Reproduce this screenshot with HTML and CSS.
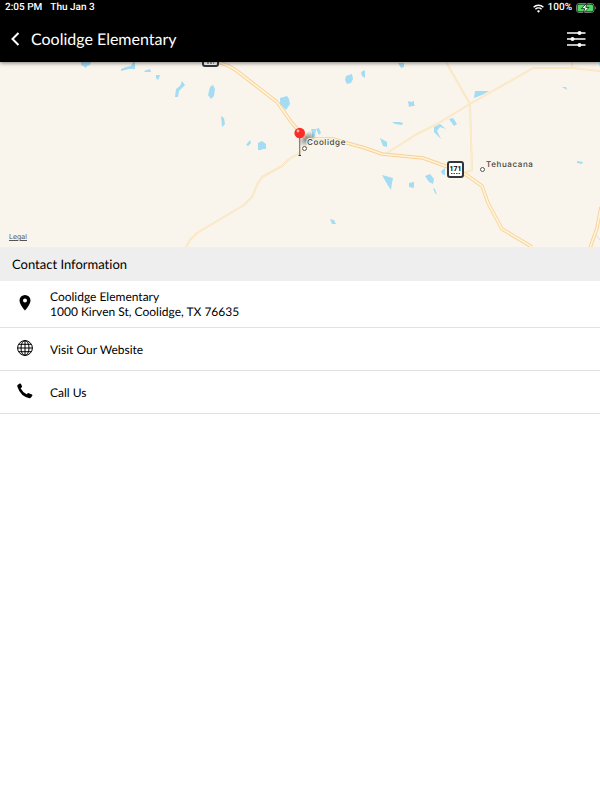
FILE: index.html
```html
<!doctype html>
<html lang="en">
  <head>
    <meta charset="utf-8" />
    <meta name="viewport" content="width=device-width, initial-scale=1" />
    <title>Coolidge Elementary</title>
    <link rel="stylesheet" href="styles.css">
  </head>
  <body>
    <header class="top">
      <div class="status">
        <span>2:05 PM</span>
        <span>Thu Jan 3</span>
        <span class="status-right">
          <svg width="11" height="9" viewBox="0 0 11 9" fill="none" stroke="#fff" stroke-width="1.5">
            <path d="M.6 3.3a7 7 0 0 1 9.8 0M2.4 5.3a4.5 4.5 0 0 1 6.2 0" />
            <path d="M5.5 8.8 3.9 7a2.3 2.3 0 0 1 3.2 0z" fill="#fff" stroke="none" />
          </svg>
          <span>100%</span>
          <svg width="20" height="10" viewBox="0 0 20 10">
            <rect x=".5" y=".5" width="17.5" height="9" rx="2.5" fill="none" stroke="#777" />
            <rect x="1.5" y="1.5" width="15.5" height="7" rx="1.5" fill="#4cd964" />
            <path d="M11 0 5.5 5.6h3.2L7.5 10 13 4.4H9.8z" fill="#fff" stroke="#000" stroke-width=".7" />
            <path d="M19 3.5v3q1-.4 1-1.5T19 3.5" fill="#777" />
          </svg>
        </span>
      </div>
      <nav class="navbar">
        <button class="icon-button" aria-label="Back">
          <svg width="10" height="14" viewBox="0 0 10 14" fill="none" stroke="#fff" stroke-width="2">
            <path d="M8.5 1l-6 6 6 6" />
          </svg>
        </button>
        <h1>Coolidge Elementary</h1>
        <button class="icon-button filter" aria-label="Options">
          <svg width="20" height="16" viewBox="0 0 20 16" fill="#fff">
            <path d="M1 1.2h18.5v1.5H1zM1 7.2h18.5v1.5H1zM1 13.2h18.5v1.5H1z" />
            <circle cx="13.5" cy="2" r="2" />
            <circle cx="6.5" cy="8" r="2" />
            <circle cx="13.5" cy="14" r="2" />
          </svg>
        </button>
      </nav>
    </header>

    <main>
      <div class="map">
        <svg class="map-canvas" viewBox="0 62 600 185" preserveAspectRatio="xMidYMid slice">
          <defs>
            <filter id="soft"><feGaussianBlur stdDeviation="2" /></filter>
          </defs>
          <!-- lakes -->
          <g class="water">
            <path d="M81 62h10l-1 3-3 1-1 2-3-2-2-1z" />
            <path d="m121 69 5-2 5-1 2-4h2v7l-6 0-8 2zM144 71l6-2 1 3-6 0zM156 75h4l-1 3-1 2-2-2z" />
            <path d="m182 81 3 4-6 6-1 6h-3l1-8 4-3z" />
            <path d="m210 87 3-2 2 4-1 7-3 3-3-4zM221 116l3 2 1 6-3 3zM246 145l4-5 1 3-3 3z" />
            <path d="m258 143 4-2 4 3 0 5-3 0-2 1-3 0zM280 98l7-2 2 3 1 5-4 6-6-6z" />
            <path d="m311 129 5 0-1 7-3 3v-7zM316 129l3-1 2 5-2 2z" />
            <path d="m346 76 6-2 1 5-2 4-4 1-2-4zM361 72l4-2v8l-3-2z" />
            <path d="m380 138 7 4 0 5-4-1zM382 175l11 3-1 5-1 7-4-6zM330 219l4 1 2 4-4 0z" />
            <path d="m398 63 6 0 0 4-3 1zM408 101l3 1 3-1 0 3 1 2-3 0-3 1zM392 122l8 0 3 1-1 2-7-1z" />
            <path d="m434 127 6-3 6 5-6-2-3 4 4 8-7-7zM449 119l4-1 4 6-3 2zM475 91l14 0-7 4-8 3z" />
            <path d="m441 171 4-3v7l-3-1zM425 176l5-2 4 5-1 5-4-2zM433 188l2 1 2 6-2-2z" />
            <path d="m409 183 5-1 0 6-5-1zM562 87l4 0 1 3zM577 161l6 1-1 2-5-1z" />
            <path d="M598 62h2v5z" />
          </g>
          <!-- local roads -->
          <g class="road local">
            <path d="m308 146-9 7-11 7-6 6-20 11-4 6-6 14-8 8-47 28-7 7-4 7" />
            <path d="m387 153 30-19 20-10 33-20 63-36h39l28 3M572 62v6" />
            <path d="m446 62 24 42 2 66-8 3" />
          </g>
          <g class="road local-core">
            <path d="m308 146-9 7-11 7-6 6-20 11-4 6-6 14-8 8-47 28-7 7-4 7" />
            <path d="m387 153 30-19 20-10 33-20 63-36h39l28 3M572 62v6" />
            <path d="m446 62 24 42 2 66-8 3" />
          </g>
          <path d="m596 235 4 5" fill="none" stroke="#ddd" />
          <!-- highways, drawn as a casing and a lighter core -->
          <g class="road highway">
            <path d="M210 60q18 4 27 11l40 31 15 21 15 17q8-2 26-1l32 9 17 6 41 4 25 9 17 7 17 12 6 17 14 26 30 18" />
            <path d="m601 207-4 21-7 20" />
          </g>
          <g class="road highway-core">
            <path d="M210 60q18 4 27 11l40 31 15 21 15 17q8-2 26-1l32 9 17 6 41 4 25 9 17 7 17 12 6 17 14 26 30 18" />
            <path d="m601 207-4 21-7 20" />
          </g>
          <!-- route signs -->
          <rect class="sign" x="203" y="51" width="15" height="15" rx="2" />
          <path d="M207 63h7" stroke="#444" stroke-dasharray="2 1" />
          <rect class="sign" x="448" y="162" width="15" height="15" rx="2" />
          <text class="sign-number" x="455.5" y="171">171</text>
          <path d="M451 173.5h9" stroke="#444" stroke-dasharray="1.5 1" />
          <!-- pin -->
          <ellipse cx="307" cy="139" rx="7" ry="4" transform="rotate(-38 307 139)" fill="#000" opacity=".4" filter="url(#soft)" />
          <path d="M299.7 137v18" stroke="#777" stroke-width="1.2" />
          <path d="M298.5 155.500h2.500" stroke="#333" />
          <circle cx="299.700" cy="133" r="5.300" fill="#fb2b25" />
          <circle cx="298" cy="131" r="1.400" fill="#ffb3ae" />
          <!-- towns -->
          <circle class="town" cx="304.5" cy="148.5" r="2" />
          <text class="town-name" x="307" y="145">Coolidge</text>
          <circle class="town" cx="482.5" cy="169.5" r="2" />
          <text class="town-name" x="486" y="167">Tehuacana</text>
        </svg>
        <a class="legal" href="#">Legal</a>
      </div>

      <h2>Contact Information</h2>
      <ul class="contacts">
        <li>
          <a href="#">
            <svg class="icon" viewBox="0 0 16 16">
              <path fill-rule="evenodd" d="M8 0a5.500 5.500 0 0 0-5.500 5.500C2.500 9.500 8 15.500 8 15.500s5.500-6 5.500-10A5.500 5.500 0 0 0 8 0zm0 3.600a2 2 0 1 1 0 4 2 2 0 0 1 0-4z" />
            </svg>
            <span>Coolidge Elementary<br />1000 Kirven St, Coolidge, TX 76635</span>
          </a>
        </li>
        <li>
          <a href="#">
            <svg class="icon line" viewBox="0 0 16 16">
              <circle cx="8" cy="8" r="7.400" />
              <ellipse cx="8" cy="8" rx="4" ry="7.400" />
              <path d="M8 .5v15M.5 8h15M2 4.300h12M2 11.700h12" />
            </svg>
            <span>Visit Our Website</span>
          </a>
        </li>
        <li>
          <a href="#">
            <svg class="icon" viewBox="0 0 16 16">
              <path d="M.6 2 2.600.6q.9-.5 1.400.3l1 2.300q.3.900-.5 1.400l-.9.700q1.900 3.800 6 6l.8-.9q.6-.6 1.400-.2l3.100 1.300q.8.500.4 1.300l-1.300 1.700q-.5.800-1.500.7Q3.600 13.800.3 3.600 0 2.600.6 2z" />
            </svg>
            <span>Call Us</span>
          </a>
        </li>
      </ul>
    </main>
  </body>
</html>
```
FILE: styles.css
```css
body {
  margin: 0;
  background: #fff;
  color: #000;
  font-family: Lato, sans-serif;
  font-variant-ligatures: none;
  text-rendering: geometricPrecision;
}

.top {
  position: relative;
  z-index: 1;
  background: #000;
  color: #fff;
  box-shadow: 0 1px 4px rgba(0, 0, 0, 0.5);
}

.status {
  display: flex;
  gap: 8px;
  padding: 0 4px 0 5px;
  font: 500 10px/16px Roboto, sans-serif;
}

.status-right {
  display: flex;
  align-items: center;
  gap: 4px;
  margin-left: auto;
}

.navbar {
  display: flex;
  align-items: center;
  height: 46px;
  padding: 0 14px 0 10px;
}

.navbar h1 {
  margin: 0 0 0 11px;
  font-size: 16px;
  font-weight: 400;
}

.icon-button {
  display: flex;
  padding: 0;
  border: none;
  background: none;
  cursor: pointer;
}

.filter {
  margin-left: auto;
}

.map {
  position: relative;
  height: 185px;
  background: #faf5ec;
}

.map-canvas {
  display: block;
  width: 100%;
  height: 100%;
}

.water {
  fill: #a3dcf3;
}

.road {
  fill: none;
  stroke-linejoin: round;
}

.local {
  stroke: #fae3bc;
  stroke-width: 2;
}

.local-core {
  stroke: #fcedd0;
  stroke-width: 1;
}

.highway {
  stroke: #f8d09c;
  stroke-width: 3.5;
}

.highway-core {
  stroke: #fff5d2;
  stroke-width: 1.7;
}

.sign {
  fill: #fff;
  stroke: #333539;
  stroke-width: 2;
}

.sign-number {
  font: 700 7px Roboto, sans-serif;
  text-anchor: middle;
}

.town {
  fill: #fff;
  stroke: #555;
}

.town-name {
  font: 500 8px Inter, sans-serif;
  letter-spacing: 0.6px;
  fill: #444;
  stroke: #faf5ec;
  stroke-width: 2px;
  paint-order: stroke;
}

.legal {
  position: absolute;
  left: 9px;
  bottom: 6px;
  color: #555;
  font: 7px/9px Inter, sans-serif;
}

h2 {
  margin: 0;
  padding: 0 12px;
  background: #eee;
  font-size: 13px;
  font-weight: 400;
  line-height: 34px;
}

.contacts {
  margin: 0;
  padding: 0;
  list-style: none;
}

.contacts li {
  border-bottom: 1px solid #e2e2e2;
}

.contacts a {
  display: flex;
  align-items: center;
  gap: 17px;
  min-height: 26px;
  padding: 8px 17px;
  color: #000;
  font-size: 12px;
  line-height: 15px;
  text-decoration: none;
}

.icon {
  flex: none;
  width: 16px;
  height: 16px;
  margin-bottom: 2px;
}

.line {
  fill: none;
  stroke: #000;
}
```
